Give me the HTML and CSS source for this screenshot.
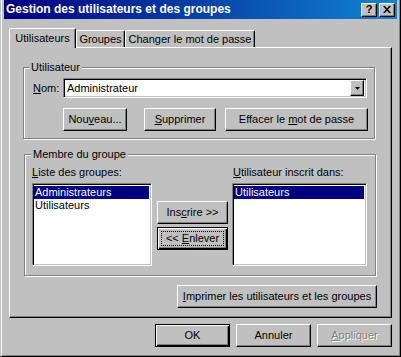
FILE: index.html
```html
<!DOCTYPE html>
<html lang="fr">
<head>
    <meta charset="UTF-8">
    <title>Gestion des utilisateurs et des groupes</title>
    <link rel="stylesheet" href="styles.css">
</head>
<body>
    <div class="window">
        <!-- Barre de titre -->
        <div class="titlebar">
            <span class="title">Gestion des utilisateurs et des groupes</span>
            <div class="caption-buttons">
                <div class="caption-btn help">?</div>
                <div class="caption-btn">
                    <svg width="8" height="7" viewBox="0 0 8 7">
                        <path d="M0 0h2l2 2.4l2-2.4h2l-3 3.5l3 3.5h-2l-2-2.4l-2 2.4h-2l3-3.5z" fill="#000"/>
                    </svg>
                </div>
            </div>
        </div>

        <!-- Onglets -->
        <div class="tabs">
            <div class="tab selected">Utilisateurs</div>
            <div class="tab">Groupes</div>
            <div class="tab">Changer le mot de passe</div>
        </div>

        <div class="panel">
            <div class="group group-user">
                <span class="legend">Utilisateur</span>
                <div class="name-row">
                    <label class="name-label"><u>N</u>om:</label>
                    <div class="combo">
                        <span class="combo-value">Administrateur</span>
                        <span class="combo-btn">
                            <svg width="5" height="3" viewBox="0 0 5 3"><path d="M0 0h5l-2.5 3z" fill="#000"/></svg>
                        </span>
                    </div>
                </div>
                <div class="button-row">
                    <button class="btn btn-new">Nou<u>v</u>eau...</button>
                    <button class="btn btn-delete"><u>S</u>upprimer</button>
                    <button class="btn btn-reset">Effacer le <u>m</u>ot de passe</button>
                </div>
            </div>

            <div class="group group-members">
                <span class="legend">Membre du groupe</span>
                <div class="members">
                    <div class="list-label"><u>L</u>iste des groupes:</div>
                    <div></div>
                    <div class="list-label"><u>U</u>tilisateur inscrit dans:</div>

                    <div class="listbox list-groups">
                        <div class="list-item selected">Administrateurs</div>
                        <div class="list-item">Utilisateurs</div>
                    </div>
                    <div class="move-buttons">
                        <button class="btn">Ins<u>c</u>rire &gt;&gt;</button>
                        <button class="btn default"><span class="focus">&lt;&lt; <u>E</u>nlever</span></button>
                    </div>
                    <div class="listbox list-member">
                        <div class="list-item selected">Utilisateurs</div>
                    </div>
                </div>
            </div>

            <div class="print-row">
                <button class="btn btn-print"><u>I</u>mprimer les utilisateurs et les groupes</button>
            </div>
        </div>

        <!-- Boutons du dialogue -->
        <div class="dialog-buttons">
            <button class="btn default">OK</button>
            <button class="btn">Annuler</button>
            <button class="btn disabled"><u>A</u>ppliquer</button>
        </div>
    </div>
</body>
</html>
```

FILE: styles.css
```css
/* Boîte de dialogue style Windows classique */
* {
    box-sizing: border-box;
}
body {
    margin: 0;
    background: #c0c0c0;
    font-family: "Liberation Sans", Arial, sans-serif;
    font-size: 11px;
    line-height: 13px;
    color: #000;
}
.window {
    width: 401px;
    height: 357px;
    background: #c0c0c0;
    border-left: 1px solid #c0c0c0;
    border-right: 1px solid #000;
    border-bottom: 1px solid #000;
    box-shadow: inset 1px 0 #fff, inset -1px -1px #808080;
    padding: 0 3px;
}
.titlebar {
    height: 19px;
    display: flex;
    align-items: center;
    background: linear-gradient(to right, #000080, #1084d0);
    color: #fff;
}
.title {
    font-weight: bold;
    font-size: 12px;
    padding-left: 2px;
    white-space: nowrap;
}
.caption-buttons {
    margin-left: auto;
    margin-right: 2px;
    display: flex;
    gap: 2px;
}
.caption-btn {
    width: 16px;
    height: 14px;
    background: #c0c0c0;
    border: 1px solid;
    border-color: #fff #000 #000 #fff;
    box-shadow: inset -1px -1px #808080;
    display: flex;
    align-items: center;
    justify-content: center;
    color: #000;
}
.caption-btn.help {
    font-weight: bold;
    font-size: 11px;
    line-height: 11px;
}
.tabs {
    display: flex;
    align-items: flex-end;
    height: 19px;
    margin: 9px 0 0 5px;
}
.tab {
    height: 17px;
    border: 1px solid;
    border-color: #fff #000 #fff #fff;
    border-bottom: none;
    border-radius: 2px 2px 0 0;
    box-shadow: inset -1px 0 #808080;
    background: #c0c0c0;
    text-align: center;
    padding-top: 2px;
    white-space: nowrap;
}
.tab:nth-child(2) {
    width: 49px;
}
.tab:nth-child(3) {
    width: 130px;
}
.tab.selected {
    position: relative;
    z-index: 1;
    width: 67px;
    height: 20px;
    margin-bottom: -1px;
    padding-top: 3px;
}
.panel {
    width: 383px;
    height: 271px;
    margin-left: 5px;
    border: 1px solid;
    border-color: #fff #000 #000 #fff;
    box-shadow: inset -1px -1px #808080;
}
.group {
    width: 352px;
    border: 1px solid #808080;
    box-shadow: inset 1px 1px #fff, 1px 1px #fff;
}
.legend {
    display: block;
    width: fit-content;
    background: #c0c0c0;
    padding: 0 2px;
    margin: -7px 0 0 5px;
}
.group-user {
    height: 72px;
    margin: 19px 0 0 13px;
}
.name-row {
    display: flex;
    align-items: center;
    margin-top: 4px;
    padding-left: 9px;
}
.name-label {
    width: 30px;
}
.combo {
    width: 304px;
    height: 20px;
    display: flex;
    align-items: center;
    background: #fff;
    border: 1px solid;
    border-color: #808080 #fff #fff #808080;
    box-shadow: inset 1px 1px #000, inset -1px -1px #c0c0c0;
    padding: 2px;
}
.combo-value {
    flex: 1;
    padding-left: 1px;
}
.combo-btn {
    width: 14px;
    height: 16px;
    background: #c0c0c0;
    border: 1px solid;
    border-color: #fff #000 #000 #fff;
    box-shadow: inset -1px -1px #808080;
    display: flex;
    align-items: center;
    justify-content: center;
}
.button-row {
    display: flex;
    margin-top: 10px;
    padding-left: 39px;
}
.btn {
    height: 23px;
    font-family: inherit;
    font-size: 11px;
    line-height: 13px;
    color: #000;
    background: #c0c0c0;
    border: 1px solid;
    border-color: #fff #000 #000 #fff;
    box-shadow: inset -1px -1px #808080;
    padding: 0;
    white-space: nowrap;
}
.btn.default {
    border-color: #000;
    box-shadow: inset 1px 1px #fff, inset -1px -1px #000, inset -2px -2px #808080;
}
.btn.disabled {
    color: #808080;
    text-shadow: 1px 1px #fff;
}
.btn-new {
    width: 64px;
}
.btn-delete {
    width: 72px;
    margin-left: 17px;
}
.btn-reset {
    width: 143px;
    margin-left: 9px;
}
.group-members {
    height: 122px;
    margin: 15px 0 0 14px;
}
.group-members .legend {
    margin-left: 6px;
}
.members {
    display: grid;
    grid-template-columns: 120px 71px 134px;
    column-gap: 5px;
    row-gap: 4px;
    margin-top: 5px;
    padding-left: 7px;
}
.members > :nth-child(6) {
    margin-left: -1px;
}
.listbox {
    height: 83px;
    background: #fff;
    border: 1px solid;
    border-color: #808080 #fff #fff #808080;
    box-shadow: inset 1px 1px #000, inset -1px -1px #c0c0c0;
    padding: 2px 2px 2px 1px;
}
.list-item {
    height: 13px;
    padding-left: 1px;
    white-space: nowrap;
}
.list-item.selected {
    background: #000080;
    color: #fff;
}
.move-buttons {
    display: flex;
    flex-direction: column;
    gap: 3px;
    margin-top: 18px;
}
.move-buttons .btn {
    width: 71px;
}
.move-buttons .default {
    padding: 3px;
}
.focus {
    display: block;
    height: 100%;
    border: 1px dotted #000;
    line-height: 13px;
}
.print-row {
    margin-top: 9px;
    padding-left: 167px;
}
.btn-print {
    width: 200px;
}
.dialog-buttons {
    width: 383px;
    margin: 6px 0 0 5px;
    display: flex;
    justify-content: flex-end;
    gap: 6px;
}
.dialog-buttons .btn {
    width: 75px;
}
```
